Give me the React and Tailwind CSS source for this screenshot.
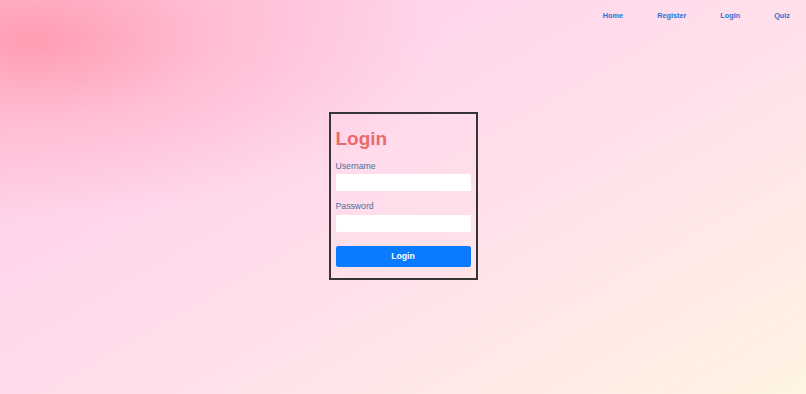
import React from "react";

const links = ["Home", "Register", "Login", "Quiz"];

export default function App() {
  return (
    <div className="h-screen w-full flex flex-col font-['Liberation_Sans',Arial,sans-serif] bg-[radial-gradient(ellipse_50%_45%_at_4%_10%,#ff9db2_0%,rgba(255,175,198,0.55)_45%,rgba(255,195,220,0)_100%),linear-gradient(150deg,#ffc6dc_0%,#ffd6ec_32%,#ffe2ea_60%,#fff4e2_100%)]">
      <header className="h-[31px] flex items-center justify-end gap-[34px] pr-[16px]">
        {links.map((l) => (
          <a key={l} href="#" className="text-[7.3px] font-bold text-[#2a72d4] leading-none">
            {l}
          </a>
        ))}
      </header>

      <main className="flex-1 flex items-center justify-center pb-[33px]">
        <div className="w-[149px] border-2 border-[#353535] px-[5px] pt-[14px] pb-[11px] flex flex-col">
          <h2 className="text-[19px] leading-[22px] font-bold text-[#ea6b6b]">Login</h2>

          <label className="mt-[11px] text-[8.7px] leading-[10px] text-[#48709e]">Username</label>
          <input className="mt-[3px] h-[17px] w-full bg-white rounded-[1px] outline-none" />

          <label className="mt-[10px] text-[8.7px] leading-[10px] text-[#48709e]">Password</label>
          <input type="password" className="mt-[4px] h-[17px] w-full bg-white rounded-[1px] outline-none" />

          <button className="mt-[14px] h-[21px] w-full bg-[#0a7bff] rounded-[2px] text-white text-[8.7px] font-bold">
            Login
          </button>
        </div>
      </main>
    </div>
  );
}
